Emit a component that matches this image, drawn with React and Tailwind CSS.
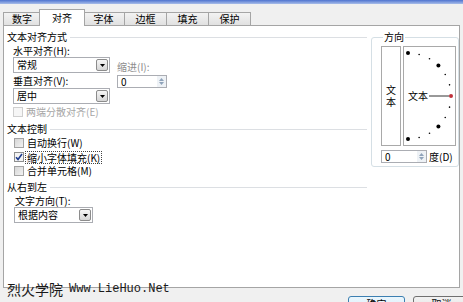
import React from "react";

const cjk = "font-['Noto_Sans_CJK_SC',sans-serif]";

const tabs = ["数字", "对齐", "字体", "边框", "填充", "保护"];
const ticks = [90, 75, 60, 45, 30, 15, 0, -15, -30, -45, -60, -75, -90];

function Header({ children }) {
  return (
    <div className="flex items-center h-[12px]">
      <span>{children}</span>
      <div className="flex-1 ml-[3px] h-px bg-[#dcdfe3]" />
    </div>
  );
}

function Arrow() {
  return (
    <svg width="5" height="3" viewBox="0 0 5 3">
      <path d="M0 0h5L2.5 3z" fill="#000" />
    </svg>
  );
}

function Select({ className, children }) {
  return (
    <div className={`flex items-center h-[16px] border border-[#abadb3] bg-white ${className}`}>
      <span className="flex-1 pl-[3px]">{children}</span>
      <span className="w-[12px] h-[12px] mr-[1px] border border-[#8c8c8c] rounded-[2px] bg-gradient-to-b from-[#f6f6f6] to-[#d6d6d6] flex items-center justify-center">
        <Arrow />
      </span>
    </div>
  );
}

function Spinner({ className }) {
  return (
    <div className={`flex items-stretch h-[13px] border border-[#abadb3] bg-white ${className}`}>
      <span className="flex-1 pl-[3px] leading-[11px]">0</span>
      <span className="w-[9px] flex flex-col items-center justify-center gap-[1px] bg-[#eef2f6]">
        <svg width="5" height="3" viewBox="0 0 5 3">
          <path d="M0 3h5L2.5 0z" fill="#8fa3ba" />
        </svg>
        <svg width="5" height="3" viewBox="0 0 5 3">
          <path d="M0 0h5L2.5 3z" fill="#8fa3ba" />
        </svg>
      </span>
    </div>
  );
}

function Check({ checked, disabled, focus, children }) {
  const box = disabled
    ? "w-[10px] h-[10px] border border-[#cfcfcf] bg-[#f6f6f6]"
    : checked
    ? "w-[10px] h-[10px] border border-[#8e8f8f] bg-[#f4f4f4] flex items-center justify-center"
    : "w-[10px] h-[10px] border border-[#a3a3a3] bg-gradient-to-br from-[#d6d6d6] to-[#f2f2f2]";
  return (
    <div className="flex items-center h-[14px] ml-[7px]">
      <span className={box}>
        {checked && (
          <svg width="8" height="8" viewBox="0 0 8 8">
            <path d="M1 4.2l2 2.2L7 1" fill="none" stroke="#1f3d8f" strokeWidth="1.6" />
          </svg>
        )}
      </span>
      {focus ? (
        <span className="ml-[1px] pl-[1px] pr-[1px] border border-dotted border-[#444] leading-[11px]">{children}</span>
      ) : (
        <span className={disabled ? "ml-[3px] text-[#a6a6a6]" : "ml-[3px]"}>{children}</span>
      )}
    </div>
  );
}

function Dial() {
  return (
    <div className="w-[53px] h-[100px] ml-[2px] border border-[#a9a9a9] bg-white">
      <svg width="51" height="98" viewBox="0 0 51 98">
        {ticks.map((a) => {
          const r = (a * Math.PI) / 180;
          const x = 4 + 43 * Math.cos(r);
          const y = 49 - 43 * Math.sin(r);
          if (a === 0) return <circle key={a} cx={x} cy={y} r="2" fill="#c0303a" />;
          const big = Math.abs(a) === 90 || Math.abs(a) === 45;
          return <circle key={a} cx={x} cy={y} r={big ? 2 : 0.8} fill="#000" />;
        })}
        <text x="4" y="53" fontSize="10" fill="#000" fontFamily="Noto Sans CJK SC, sans-serif">
          文本
        </text>
        <line x1="25" y1="49" x2="45" y2="49" stroke="#333" strokeWidth="1" />
      </svg>
    </div>
  );
}

export default function App() {
  return (
    <div className={`relative w-[463px] h-[302px] overflow-hidden bg-[#f0f0f0] text-[10px] leading-[12px] text-black ${cjk}`}>
      <div className="h-[4px] bg-gradient-to-b from-[#4f73cf] to-[#a9bde9]" />

      {/* tab strip */}
      <div className="flex items-end h-[21px] pl-[3px]">
        {tabs.map((t, i) =>
          i === 1 ? (
            <div
              key={t}
              className="relative z-10 w-[46px] h-[17px] -mx-[2px] -mb-px border border-b-0 border-[#a5a5a5] bg-white flex items-center justify-center"
            >
              {t}
            </div>
          ) : (
            <div
              key={t}
              className={`h-[13px] border-t border-r border-[#a5a5a5] bg-gradient-to-b from-[#f3f3f3] to-[#e1e1e1] flex items-center justify-center ${
                i === 0 ? "w-[38px] border-l" : "w-[42px]"
              }`}
            >
              {t}
            </div>
          )
        )}
      </div>

      {/* panel */}
      <div className="mx-[3px] h-[263px] border border-[#a5a5a5] bg-white flex items-start pl-[3px] pt-[5px]">
        <div className="w-[361px] flex flex-col">
          <Header>文本对齐方式</Header>
          <div className="flex mt-[2px]">
            <div className="flex flex-col ml-[6px]">
              <span>水平对齐(H):</span>
              <Select className="w-[97px]">常规</Select>
              <span className="mt-[2px]">垂直对齐(V):</span>
              <Select className="w-[97px] mt-px">居中</Select>
            </div>
            <div className="flex flex-col ml-[7px] mt-[16px]">
              <span className="text-[#8d8d8d]">缩进(I):</span>
              <Spinner className="w-[50px] mt-[2px]" />
            </div>
          </div>
          <div className="mt-px -ml-px">
            <Check disabled>两端分散对齐(E)</Check>
          </div>

          <div className="mt-[4px]">
            <Header>文本控制</Header>
          </div>
          <div className="mt-px">
            <Check>自动换行(W)</Check>
          </div>
          <Check checked focus>
            缩小字体填充(K)
          </Check>
          <Check>合并单元格(M)</Check>

          <div className="mt-[3px]">
            <Header>从右到左</Header>
          </div>
          <span className="mt-[2px] ml-[8px]">文字方向(T):</span>
          <Select className="w-[79px] ml-[7px]">根据内容</Select>
        </div>

        <fieldset className="ml-[4px] w-[87px] border border-[#d5dfe5] rounded-[3px] pl-[9px] pr-[2px] pb-[3px]">
          <legend className="ml-[2px] px-px leading-[12px]">方向</legend>
          <div className="flex mt-[3px]">
            <div className="w-[20px] h-[100px] border border-[#a9a9a9] bg-white flex flex-col items-center justify-center leading-[12px]">
              <span>文</span>
              <span>本</span>
            </div>
            <Dial />
          </div>
          <div className="flex items-center mt-[4px]">
            <Spinner className="w-[46px]" />
            <span className="ml-[2px]">度(D)</span>
          </div>
        </fieldset>
      </div>

      {/* dialog buttons */}
      <div className="flex justify-end gap-[8px] mt-[8px] -mr-[7px]">
        <div className="w-[57px] h-[22px] border border-[#3c7fb1] rounded-[3px] bg-gradient-to-b from-[#eaf6fd] to-[#d7eefb] flex justify-center pt-[1px]">
          确定
        </div>
        <div className="w-[57px] h-[22px] border border-[#707070] rounded-[3px] bg-gradient-to-b from-[#f2f2f2] to-[#dddddd] flex justify-center pt-[1px]">
          取消
        </div>
      </div>

      {/* watermark */}
      <div className="absolute left-[7px] top-[281px] flex items-end text-[#1a1a1a]">
        <span className="text-[14px] leading-[16px]">烈火学院</span>
        <span className="ml-[6px] text-[12px] leading-[15px] font-['Liberation_Mono',monospace]">Www.LieHuo.Net</span>
      </div>
    </div>
  );
}
